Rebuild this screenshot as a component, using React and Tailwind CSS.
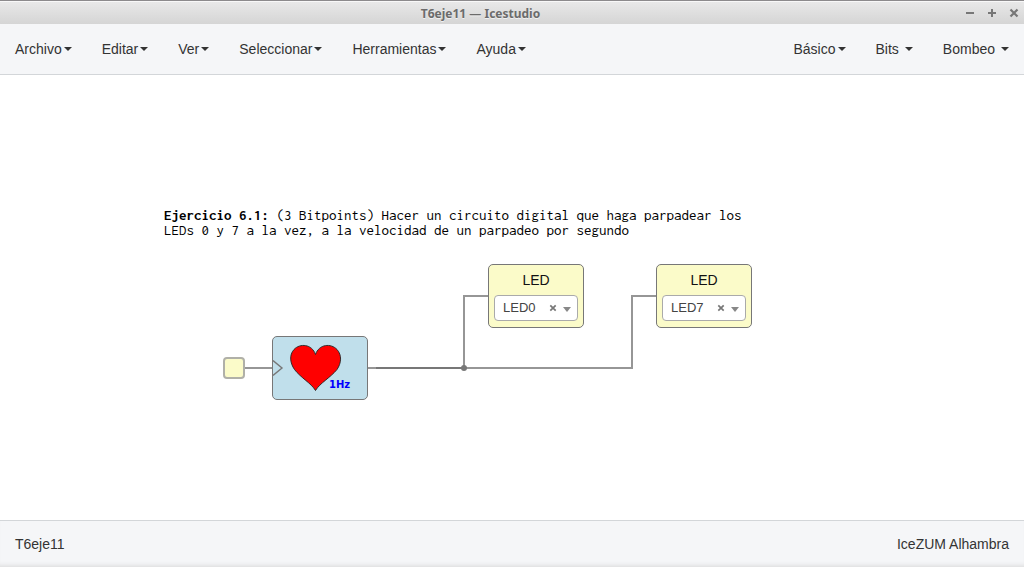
import { useState } from 'react';

const fileMenus = ['Archivo', 'Editar', 'Ver', 'Seleccionar', 'Herramientas', 'Ayuda'];
const blockMenus = [
  { name: 'Básico', spaced: false },
  { name: 'Bits', spaced: true },
  { name: 'Bombeo', spaced: true },
];

function Caret({ spaced }) {
  return (
    <svg className={spaced ? 'ml-1.5 h-1 w-2' : 'ml-0.5 h-1 w-2'} viewBox="0 0 8 4" aria-hidden="true">
      <path d="M0 0H8L4 4Z" fill="currentColor" />
    </svg>
  );
}

function MenuButton({ name, spaced }) {
  return (
    <button type="button" className="flex items-center px-[15px]">
      {name}
      <Caret spaced={spaced} />
    </button>
  );
}

function TitleBar() {
  return (
    <header className="flex h-6 shrink-0 items-center border-t border-[#8c8a8c] bg-linear-to-b from-[#e9e9e9] to-[#d5d5d5] shadow-[inset_0_1px_0_#f8f8f8]">
      <h1 className="flex-1 pt-0.5 text-center font-['Noto_Sans','Open_Sans',sans-serif] text-[12px] leading-4 font-bold text-[#6b6b6b] [text-shadow:0_1px_0_#f0f0f0]">
        T6eje11 — Icestudio
      </h1>
      <div className="flex justify-end gap-3 pr-[5px] pl-1 text-[#777777]">
        <button type="button" aria-label="Minimizar">
          <svg className="h-2.5 w-2.5" viewBox="0 0 10 10"><path d="M1 5H9" stroke="currentColor" strokeWidth="2" /></svg>
        </button>
        <button type="button" aria-label="Maximizar">
          <svg className="h-2.5 w-2.5" viewBox="0 0 10 10"><path d="M1 5H9M5 1V9" stroke="currentColor" strokeWidth="2" /></svg>
        </button>
        <button type="button" aria-label="Cerrar">
          <svg className="h-2.5 w-2.5" viewBox="0 0 10 10"><path d="M1.5 1.5L8.5 8.5M8.5 1.5L1.5 8.5" stroke="currentColor" strokeWidth="2.2" /></svg>
        </button>
      </div>
    </header>
  );
}

function LedBlock({ id, initial, className }) {
  const [pin, setPin] = useState(initial);
  return (
    <div className={`absolute flex h-16 w-24 flex-col rounded-[5px] border border-[#777777] bg-[#fbfbc9] px-[5px] pt-[5px] ${className}`}>
      <label htmlFor={id} className="text-center text-[14px] leading-5 text-[#111111]">LED</label>
      <div className="relative mt-[5px]">
        <select
          id={id}
          value={pin}
          onChange={(e) => setPin(e.target.value)}
          className="block h-[26px] w-full appearance-none rounded-[4px] border border-[#aaaaaa] bg-white pr-8 pl-2 text-[13px] text-[#444444]"
        >
          <option value="" />
          {['LED0', 'LED1', 'LED2', 'LED3', 'LED4', 'LED5', 'LED6', 'LED7'].map((p) => (
            <option key={p} value={p}>{p}</option>
          ))}
        </select>
        <button type="button" aria-label="Quitar" onClick={() => setPin('')} className="absolute top-[9px] right-[21px] text-[#777777]">
          <svg className="block h-2 w-2" viewBox="0 0 8 8"><path d="M1.3 1.3L6.7 6.7M6.7 1.3L1.3 6.7" stroke="currentColor" strokeWidth="1.7" /></svg>
        </button>
        <svg className="pointer-events-none absolute top-3 right-[7px] h-[5px] w-2" viewBox="0 0 8 5" aria-hidden="true">
          <path d="M0 0H8L4 5Z" fill="#888888" />
        </svg>
      </div>
    </div>
  );
}

function HeartBlock() {
  return (
    <div className="absolute top-[261px] left-[272px] h-16 w-24 rounded-[5px] border border-[#777777] bg-[#c0dfeb]">
      <svg className="block h-full w-full" viewBox="1 1 94 62" role="img" aria-label="Corazón 1Hz">
        <path d="M1 24.5L10 32L1 39.5" fill="none" stroke="#777777" strokeWidth="1.4" />
        <path
          d="M43.5 54.5C39 47 29 42 22.500 33.500C18 27 17 19 22 13.500C28 7 40 8 43.500 18.500C47 8 59 7 65 13.500C70 19 69.500 27 65 33.500C58 42 48 47 43.500 54.500Z"
          fill="#ff0000"
          stroke="#222222"
          strokeWidth="0.9"
        />
        <text x="57" y="52" fill="#0000ff" fontFamily="'DejaVu Sans', sans-serif" fontWeight="700" fontSize="10">1Hz</text>
      </svg>
    </div>
  );
}

function Wires() {
  return (
    <svg className="pointer-events-none absolute top-0 left-0 h-[445px] w-[800px]" viewBox="0 0 800 445" aria-hidden="true">
      <g fill="none" stroke="#969696" strokeWidth="2">
        <path d="M244 293H272" />
        <path d="M368 293H632V221H656" />
        <path d="M464 293V221H488" />
      </g>
      <path d="M376 293H464" stroke="#777777" strokeWidth="2" />
      <circle cx="464" cy="293" r="3" fill="#777777" />
    </svg>
  );
}

export default function App() {
  return (
    <div className="flex min-h-screen flex-col bg-white font-['Liberation_Sans',Arial,sans-serif] text-[14px] leading-5 text-[#333333]">
      <TitleBar />
      <nav className="flex h-[51px] shrink-0 justify-between border-b border-[#d3d6d9] bg-[#f5f6f8]">
        <div className="flex">
          {fileMenus.map((name) => <MenuButton key={name} name={name} />)}
        </div>
        <div className="flex">
          {blockMenus.map((menu) => <MenuButton key={menu.name} {...menu} />)}
        </div>
      </nav>
      <main className="relative min-h-[445px] flex-1 overflow-hidden">
        <p className="absolute top-[133px] left-[164px] w-[590px] font-['Inconsolata','Noto_Sans_Mono_CJK_SC',monospace] text-[15px] leading-[15px] text-black">
          <strong>Ejercicio 6.1:</strong> (3 Bitpoints) Hacer un circuito digital que haga parpadear los LEDs 0 y 7 a la vez, a la velocidad de un parpadeo por segundo
        </p>
        <Wires />
        <div className="absolute top-[282px] left-[223px] h-[22px] w-[22px] rounded-[4px] border-2 border-[#b0b0a8] bg-[#fbfbc9]" />
        <HeartBlock />
        <LedBlock id="led-a" initial="LED0" className="top-[189px] left-[488px]" />
        <LedBlock id="led-b" initial="LED7" className="top-[189px] left-[656px]" />
      </main>
      <footer className="flex h-[47px] shrink-0 items-center justify-between border-t border-[#d3d6d9] bg-[#f5f6f8] px-[15px] shadow-[inset_0_-5px_5px_-4px_#d8d8d8]">
        <span>T6eje11</span>
        <span>IceZUM Alhambra</span>
      </footer>
    </div>
  );
}
